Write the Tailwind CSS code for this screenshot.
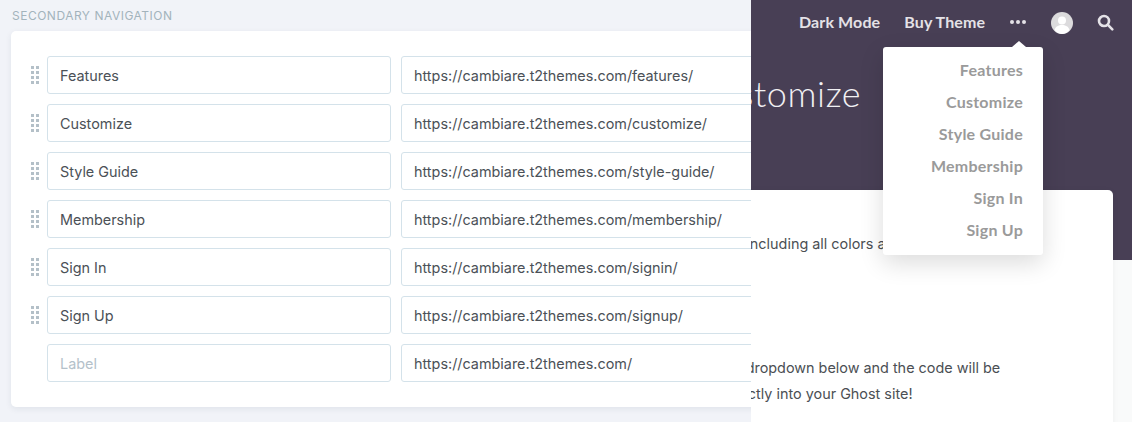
<!DOCTYPE html>
<html lang="en">
  <head>
    <meta charset="UTF-8" />
    <meta name="viewport" content="width=device-width, initial-scale=1.0" />
    <title>Secondary Navigation</title>
    <script src="https://cdn.jsdelivr.net/npm/@tailwindcss/browser@4"></script>
  </head>
  <body class="w-[1132px] h-[422px] overflow-hidden flex font-['Inter',sans-serif]">
    <!-- Left: settings panel -->
    <div class="w-[751px] h-[422px] shrink-0 overflow-hidden bg-[#f1f3f8] pl-[11px] relative z-10">
      <h2 class="pl-px pt-[9px] h-[31px] text-[12px] leading-[14px] tracking-[0.5px] text-[#a3b3bc] uppercase">Secondary Navigation</h2>
      <div class="w-[800px] h-[376px] bg-white rounded-l-[5px] shadow-[0_2px_6px_rgba(30,50,80,0.08)] pt-[25px] pl-[36px] flex flex-col gap-[10px]">
        <!-- Row -->
        <div class="relative flex gap-[10px]">
          <svg class="absolute left-[-16px] top-[10px]" width="8" height="18" viewBox="0 0 8 18" fill="#b4c0c8"><rect x="0" y="0" width="3" height="3"/><rect x="5" y="0" width="3" height="3"/><rect x="0" y="5" width="3" height="3"/><rect x="5" y="5" width="3" height="3"/><rect x="0" y="10" width="3" height="3"/><rect x="5" y="10" width="3" height="3"/><rect x="0" y="15" width="3" height="3"/><rect x="5" y="15" width="3" height="3"/></svg>
          <div class="w-[344px] h-[38px] border border-[#d4e2ea] rounded-[3px] pl-3 pt-[2px] flex items-center text-[14.4px] text-[#4b5157]">Features</div>
          <div class="w-[400px] h-[38px] border border-[#d4e2ea] rounded-[3px] pl-3 pt-[2px] flex items-center text-[14.4px] text-[#4b5157]">https://cambiare.t2themes.com/features/</div>
        </div>
        <div class="relative flex gap-[10px]">
          <svg class="absolute left-[-16px] top-[10px]" width="8" height="18" viewBox="0 0 8 18" fill="#b4c0c8"><rect x="0" y="0" width="3" height="3"/><rect x="5" y="0" width="3" height="3"/><rect x="0" y="5" width="3" height="3"/><rect x="5" y="5" width="3" height="3"/><rect x="0" y="10" width="3" height="3"/><rect x="5" y="10" width="3" height="3"/><rect x="0" y="15" width="3" height="3"/><rect x="5" y="15" width="3" height="3"/></svg>
          <div class="w-[344px] h-[38px] border border-[#d4e2ea] rounded-[3px] pl-3 pt-[2px] flex items-center text-[14.4px] text-[#4b5157]">Customize</div>
          <div class="w-[400px] h-[38px] border border-[#d4e2ea] rounded-[3px] pl-3 pt-[2px] flex items-center text-[14.4px] text-[#4b5157]">https://cambiare.t2themes.com/customize/</div>
        </div>
        <div class="relative flex gap-[10px]">
          <svg class="absolute left-[-16px] top-[10px]" width="8" height="18" viewBox="0 0 8 18" fill="#b4c0c8"><rect x="0" y="0" width="3" height="3"/><rect x="5" y="0" width="3" height="3"/><rect x="0" y="5" width="3" height="3"/><rect x="5" y="5" width="3" height="3"/><rect x="0" y="10" width="3" height="3"/><rect x="5" y="10" width="3" height="3"/><rect x="0" y="15" width="3" height="3"/><rect x="5" y="15" width="3" height="3"/></svg>
          <div class="w-[344px] h-[38px] border border-[#d4e2ea] rounded-[3px] pl-3 pt-[2px] flex items-center text-[14.4px] text-[#4b5157]">Style Guide</div>
          <div class="w-[400px] h-[38px] border border-[#d4e2ea] rounded-[3px] pl-3 pt-[2px] flex items-center text-[14.4px] text-[#4b5157]">https://cambiare.t2themes.com/style-guide/</div>
        </div>
        <div class="relative flex gap-[10px]">
          <svg class="absolute left-[-16px] top-[10px]" width="8" height="18" viewBox="0 0 8 18" fill="#b4c0c8"><rect x="0" y="0" width="3" height="3"/><rect x="5" y="0" width="3" height="3"/><rect x="0" y="5" width="3" height="3"/><rect x="5" y="5" width="3" height="3"/><rect x="0" y="10" width="3" height="3"/><rect x="5" y="10" width="3" height="3"/><rect x="0" y="15" width="3" height="3"/><rect x="5" y="15" width="3" height="3"/></svg>
          <div class="w-[344px] h-[38px] border border-[#d4e2ea] rounded-[3px] pl-3 pt-[2px] flex items-center text-[14.4px] text-[#4b5157]">Membership</div>
          <div class="w-[400px] h-[38px] border border-[#d4e2ea] rounded-[3px] pl-3 pt-[2px] flex items-center text-[14.4px] text-[#4b5157]">https://cambiare.t2themes.com/membership/</div>
        </div>
        <div class="relative flex gap-[10px]">
          <svg class="absolute left-[-16px] top-[10px]" width="8" height="18" viewBox="0 0 8 18" fill="#b4c0c8"><rect x="0" y="0" width="3" height="3"/><rect x="5" y="0" width="3" height="3"/><rect x="0" y="5" width="3" height="3"/><rect x="5" y="5" width="3" height="3"/><rect x="0" y="10" width="3" height="3"/><rect x="5" y="10" width="3" height="3"/><rect x="0" y="15" width="3" height="3"/><rect x="5" y="15" width="3" height="3"/></svg>
          <div class="w-[344px] h-[38px] border border-[#d4e2ea] rounded-[3px] pl-3 pt-[2px] flex items-center text-[14.4px] text-[#4b5157]">Sign In</div>
          <div class="w-[400px] h-[38px] border border-[#d4e2ea] rounded-[3px] pl-3 pt-[2px] flex items-center text-[14.4px] text-[#4b5157]">https://cambiare.t2themes.com/signin/</div>
        </div>
        <div class="relative flex gap-[10px]">
          <svg class="absolute left-[-16px] top-[10px]" width="8" height="18" viewBox="0 0 8 18" fill="#b4c0c8"><rect x="0" y="0" width="3" height="3"/><rect x="5" y="0" width="3" height="3"/><rect x="0" y="5" width="3" height="3"/><rect x="5" y="5" width="3" height="3"/><rect x="0" y="10" width="3" height="3"/><rect x="5" y="10" width="3" height="3"/><rect x="0" y="15" width="3" height="3"/><rect x="5" y="15" width="3" height="3"/></svg>
          <div class="w-[344px] h-[38px] border border-[#d4e2ea] rounded-[3px] pl-3 pt-[2px] flex items-center text-[14.4px] text-[#4b5157]">Sign Up</div>
          <div class="w-[400px] h-[38px] border border-[#d4e2ea] rounded-[3px] pl-3 pt-[2px] flex items-center text-[14.4px] text-[#4b5157]">https://cambiare.t2themes.com/signup/</div>
        </div>
        <div class="flex gap-[10px]">
          <div class="w-[344px] h-[38px] border border-[#d4e2ea] rounded-[3px] pl-3 pt-[2px] flex items-center text-[14.4px] text-[#b4c1ca]">Label</div>
          <div class="w-[400px] h-[38px] border border-[#d4e2ea] rounded-[3px] pl-3 pt-[2px] flex items-center text-[14.4px] text-[#4b5157]">https://cambiare.t2themes.com/</div>
        </div>
      </div>
    </div>

    <!-- Right: site preview -->
    <div class="relative w-[381px] h-[422px] shrink-0 overflow-hidden bg-[#f9fafa]">
      <div class="h-[260px] bg-[#483f55]">
        <nav class="h-[44px] flex items-center font-['Lato',sans-serif] font-bold text-[16px] tracking-[0.12px] text-[#e4e2e7]">
          <span class="ml-[48px]">Dark Mode</span>
          <span class="ml-6">Buy Theme</span>
          <svg class="ml-[25px]" width="16" height="4" viewBox="0 0 16 4" fill="#e4e2e7"><circle cx="2" cy="2" r="2"/><circle cx="8" cy="2" r="2"/><circle cx="14" cy="2" r="2"/></svg>
          <svg class="ml-[25px] mt-[2px]" width="22" height="22" viewBox="0 0 22 22"><circle cx="11" cy="11" r="11" fill="#dcdbdd"/><circle cx="11" cy="8.5" r="4" fill="#fff"/><path d="M3.5 18c1-3.6 4-5 7.500-5s6.500 1.400 7.500 5c-2 2.500-4.700 4-7.500 4s-5.500-1.500-7.500-4z" fill="#fff"/></svg>
          <svg class="ml-6" width="17" height="17" viewBox="0 0 17 17" fill="none" stroke="#e4e2e7" stroke-width="2.600"><circle cx="7" cy="7" r="5"/><path d="M10.700 10.700L15.300 15.300" stroke-linecap="round"/></svg>
        </nav>
        <h1 class="mt-[25px] ml-[-58px] font-['Lato',sans-serif] font-light text-[36px] leading-[48px] tracking-[0.6px] text-[#f1f0f3] whitespace-nowrap">Customize</h1>
      </div>
      <!-- Content card -->
      <div class="absolute left-[-100px] top-[190px] w-[462px] h-[260px] bg-white rounded-[5px] shadow-[0_1px_6px_rgba(0,0,0,0.05)] text-[14.4px] text-[#4b4f54] whitespace-nowrap">
        <p class="absolute left-[95px] top-[44px] leading-[20px]">Including all colors and fonts</p>
        <p class="absolute left-[69px] top-[168px] leading-[20px]">the dropdown below and the code will be</p>
        <p class="absolute left-[71px] top-[194px] leading-[20px]">directly into your Ghost site!</p>
      </div>
      <!-- Dropdown -->
      <div class="absolute left-[132px] top-[47px] w-[160px] h-[208px] bg-white rounded-[3px] shadow-[0_8px_24px_rgba(0,0,0,0.14)] pt-[7px] pr-5 flex flex-col items-end font-['Lato',sans-serif] font-bold text-[16px] tracking-[0.25px] leading-[32px] text-[#9a9a9a]">
        <div class="absolute left-[129px] top-[-6px] w-0 h-0 border-x-[7px] border-x-transparent border-b-[6px] border-b-white"></div>
        <span>Features</span>
        <span>Customize</span>
        <span>Style Guide</span>
        <span>Membership</span>
        <span>Sign In</span>
        <span>Sign Up</span>
      </div>
    </div>
  </body>
</html>
